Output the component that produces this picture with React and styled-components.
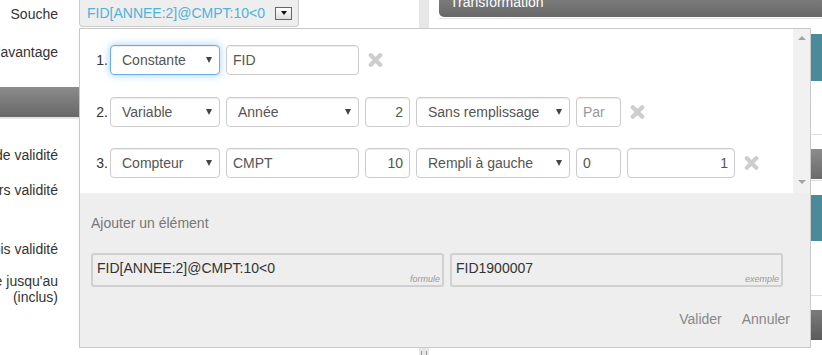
import React from 'react';
import styled, { createGlobalStyle } from 'styled-components';

const GlobalStyle = createGlobalStyle`
    html, body {
        margin: 0;
        padding: 0;
        background: #fff;
        overflow: hidden;
    }
    body {
        font-family: "Liberation Sans", Arial, sans-serif;
        font-size: 14px;
        color: #333;
    }
    * {
        box-sizing: border-box;
    }
`;

const Page = styled.div`
    display: flex;
    width: 822px;
    height: 355px;
    overflow: hidden;
`;

const FormColumn = styled.div`
    flex: none;
    width: 419px;
`;

const FormRow = styled.div`
    display: flex;
    align-items: center;
    gap: 21px;
    height: ${p => p.$h}px;
    margin-top: ${p => p.$mt || 0}px;
`;

const Label = styled.div`
    flex: none;
    display: flex;
    justify-content: flex-end;
    width: 58px;
    white-space: nowrap;
    text-align: right;
    line-height: 16px;
    color: #333;
`;

const SectionBar = styled.div`
    height: 30px;
    margin-top: 10px;
    background: linear-gradient(#8c8c8c, #676767);
    box-shadow: 0 2px 0 #e4e4e4;
`;

const Combo = styled.div`
    position: relative;
    flex: none;
    display: flex;
    align-items: center;
    justify-content: space-between;
    width: 220px;
    height: 27px;
    padding: 0 6px 0 7px;
    background: #eee;
    border: 1px solid #ccc;
    border-top: none;
    border-radius: 0 0 4px 4px;
    color: #4fb2d8;
`;

const ComboButton = styled.span`
    display: flex;
    align-items: center;
    justify-content: center;
    width: 17px;
    height: 13px;
    border: 1px solid #666;
    background: linear-gradient(#fdfdfd, #dedede);

    &::after {
        content: '';
        border-left: 3px solid transparent;
        border-right: 3px solid transparent;
        border-top: 4px solid #111;
    }
`;

const Popup = styled.div`
    position: absolute;
    top: calc(100% + 2px);
    left: -1px;
    z-index: 10;
    display: flex;
    flex-direction: column;
    width: 732px;
    height: 320px;
    border: 1px solid #c8c8c8;
    background: #eee;
`;

const Upper = styled.div`
    display: flex;
    height: 164px;
    background: #fff;
`;

const Rows = styled.div`
    flex: 1;
    display: flex;
    flex-direction: column;
    gap: 21.5px;
    padding-top: 16px;
`;

const Row = styled.div`
    display: flex;
    align-items: center;
    height: 30px;
`;

const RowNum = styled.span`
    width: 28px;
    margin-right: 2px;
    text-align: right;
    color: #333;
`;

const Fields = styled.div`
    display: flex;
    align-items: center;
    gap: 6px;
`;

const SelectBox = styled.div`
    display: flex;
    align-items: center;
    justify-content: space-between;
    width: ${p => p.$w}px;
    height: 30px;
    padding: 0 7px 0 11px;
    border: 1px solid ${p => (p.$focused ? '#66afe9' : '#ccc')};
    border-radius: 4px;
    background: #fff;
    color: #555;
    white-space: nowrap;
    box-shadow: ${p => (p.$focused
        ? 'inset 0 1px 1px rgba(0,0,0,.075), 0 0 8px rgba(102,175,233,.6)'
        : 'inset 0 1px 1px rgba(0,0,0,.075)')};
`;

const Caret = styled.span`
    border-left: 3px solid transparent;
    border-right: 3px solid transparent;
    border-top: 6px solid #444;
`;

const Input = styled.input`
    width: ${p => p.$w}px;
    height: 30px;
    margin: 0;
    padding: 0 6px;
    border: 1px solid #ccc;
    border-radius: 4px;
    background: #fff;
    color: #555;
    font: inherit;
    text-align: ${p => p.$align || 'left'};
    outline: none;
    box-shadow: inset 0 1px 1px rgba(0,0,0,.075);

    &::placeholder {
        color: #999;
    }
`;

const RemoveButton = styled.span`
    display: flex;
    margin-left: 3px;
`;

const Scrollbar = styled.div`
    flex: none;
    display: flex;
    flex-direction: column;
    align-items: center;
    justify-content: space-between;
    width: 17px;
    padding: 7px 0 9px;
    background: #f1f1f1;
`;

const Arrow = styled.span`
    border-left: 4px solid transparent;
    border-right: 4px solid transparent;
    ${p => (p.$up ? 'border-bottom' : 'border-top')}: 4px solid #a3a3a3;
`;

const Footer = styled.div`
    flex: 1;
    padding: 19px 20px 0 11px;
    background: #eee;
`;

const AddLink = styled.div`
    line-height: 20px;
    margin-top: 1px;
    color: #777;
`;

const Outputs = styled.div`
    display: flex;
    gap: 6px;
    margin-top: 20px;
`;

const Output = styled.div`
    position: relative;
    width: ${p => p.$w}px;
    height: 34px;
    padding: 5px 4px;
    border: 2px solid #d0d0d0;
    border-radius: 3px;
    background: #eee;
    line-height: 16px;
    color: #333;
`;

const Caption = styled.span`
    position: absolute;
    right: 2px;
    bottom: 1px;
    font-size: 9px;
    font-style: italic;
    line-height: 10px;
    color: #999;
`;

const Actions = styled.div`
    display: flex;
    justify-content: flex-end;
    gap: 20px;
    margin-top: 22px;
    line-height: 20px;
    color: #888;
`;

const Splitter = styled.div`
    flex: none;
    width: 10px;
    background: #e6e6e6;
`;

const Grip = styled.div`
    width: 6px;
    height: 4px;
    margin: 351px 0 0 2px;
    border-left: 1px solid #999;
    border-right: 1px solid #999;
`;

const RightColumn = styled.div`
    flex: 1;
    padding-left: 10px;
`;

const HeaderWrap = styled.div`
    margin-top: -13px;
    padding-bottom: 1px;
    border-bottom: 1px solid #e2e2e2;
`;

const Header = styled.div`
    height: 30px;
    padding-left: 11px;
    border-radius: 5px 0 0 5px;
    background: linear-gradient(#8a8a8a, #676767);
    line-height: 30px;
    color: #fff;
`;

const tileColors = {
    teal: '#4b8a99',
    gray: 'linear-gradient(#8c8c8c, #6a6a6a)',
    dark: 'linear-gradient(#7c7c7c, #5a5a5a)'
};

const Tile = styled.div`
    height: ${p => p.$h}px;
    margin-top: ${p => p.$mt}px;
    background: ${p => tileColors[p.$tone]};
`;

const Rule = styled.div`
    height: 1px;
    margin-top: ${p => p.$mt}px;
    background: #dedede;
`;

const RemoveIcon = () => (
    <svg width="15" height="14" viewBox="0 0 15 14">
        <path d="M2.8 2.3 L12.2 11.7 M12.2 2.3 L2.8 11.7" stroke="#cdcdcd" strokeWidth="4.2" strokeLinecap="round" />
    </svg>
);

const Select = ({ width, value, focused }) => (
    <SelectBox $w={width} $focused={focused}>
        <span>{value}</span>
        <Caret />
    </SelectBox>
);

const Remove = () => (
    <RemoveButton>
        <RemoveIcon />
    </RemoveButton>
);

class App extends React.Component {
    render() {
        return <Page>
            <GlobalStyle />
            <FormColumn>
                <FormRow $h={27}>
                    <Label>Souche</Label>
                    <Combo>
                        <span>FID[ANNEE:2]@CMPT:10&lt;0</span>
                        <ComboButton />
                        <Popup>
                            <Upper>
                                <Rows>
                                    <Row>
                                        <RowNum>1.</RowNum>
                                        <Fields>
                                            <Select width={110} value="Constante" focused />
                                            <Input $w={133} defaultValue="FID" readOnly />
                                            <Remove />
                                        </Fields>
                                    </Row>
                                    <Row>
                                        <RowNum>2.</RowNum>
                                        <Fields>
                                            <Select width={110} value="Variable" />
                                            <Select width={133} value="Année" />
                                            <Input $w={45} $align="right" defaultValue="2" readOnly />
                                            <Select width={154} value="Sans remplissage" />
                                            <Input $w={45} placeholder="Par" readOnly />
                                            <Remove />
                                        </Fields>
                                    </Row>
                                    <Row>
                                        <RowNum>3.</RowNum>
                                        <Fields>
                                            <Select width={110} value="Compteur" />
                                            <Input $w={133} defaultValue="CMPT" readOnly />
                                            <Input $w={45} $align="right" defaultValue="10" readOnly />
                                            <Select width={154} value="Rempli à gauche" />
                                            <Input $w={45} defaultValue="0" readOnly />
                                            <Input $w={108} $align="right" defaultValue="1" readOnly />
                                            <Remove />
                                        </Fields>
                                    </Row>
                                </Rows>
                                <Scrollbar>
                                    <Arrow $up />
                                    <Arrow />
                                </Scrollbar>
                            </Upper>
                            <Footer>
                                <AddLink>Ajouter un élément</AddLink>
                                <Outputs>
                                    <Output $w={353}>
                                        FID[ANNEE:2]@CMPT:10&lt;0
                                        <Caption>formule</Caption>
                                    </Output>
                                    <Output $w={333}>
                                        FID1900007
                                        <Caption>exemple</Caption>
                                    </Output>
                                </Outputs>
                                <Actions>
                                    <span>Valider</span>
                                    <span>Annuler</span>
                                </Actions>
                            </Footer>
                        </Popup>
                    </Combo>
                </FormRow>
                <FormRow $h={50}>
                    <Label>Type d'avantage</Label>
                </FormRow>
                <SectionBar />
                <FormRow $h={40} $mt={18}>
                    <Label>Date de début de validité</Label>
                </FormRow>
                <FormRow $h={30}>
                    <Label>Nombre de jours validité</Label>
                </FormRow>
                <FormRow $h={40} $mt={24}>
                    <Label>Nombre de mois validité</Label>
                </FormRow>
                <FormRow $h={40}>
                    <Label><span>Valable jusqu'au<br />(inclus)</span></Label>
                </FormRow>
            </FormColumn>
            <Splitter>
                <Grip />
            </Splitter>
            <RightColumn>
                <HeaderWrap>
                    <Header>Transformation</Header>
                </HeaderWrap>
                <Tile $tone="teal" $h={47} $mt={15} />
                <Rule $mt={53} />
                <Tile $tone="gray" $h={30} $mt={14} />
                <Rule $mt={1} />
                <Tile $tone="teal" $h={46} $mt={14} />
                <Rule $mt={54} />
                <Tile $tone="dark" $h={30} $mt={14} />
            </RightColumn>
        </Page>
    }
}

export default App;
